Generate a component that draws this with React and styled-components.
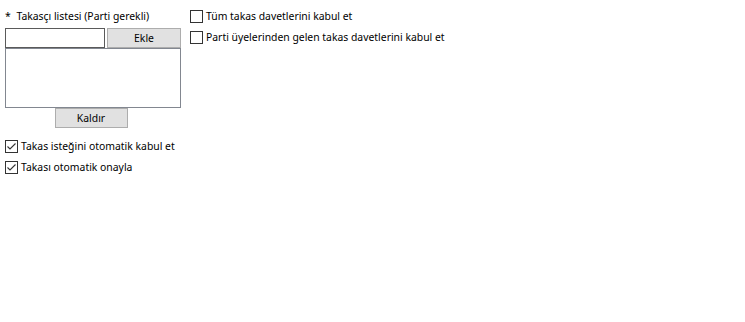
import React from "react";
import styled, { createGlobalStyle } from "styled-components";

const GlobalStyle = createGlobalStyle`
  html, body {
    margin: 0;
    padding: 0;
    background: #ffffff;
  }
  body {
    font-family: "Noto Sans", "Liberation Sans", sans-serif;
    font-size: 10.4px;
    color: #000000;
  }
`;

export default function App() {
  return (
    <Page>
      <GlobalStyle />
      <LeftColumn>
        <Title>
          <span>*</span> Takasçı listesi (Parti gerekli)
        </Title>
        <AddRow>
          <NameInput type="text" />
          <Button width="74px">Ekle</Button>
        </AddRow>
        <ListBox />
        <RemoveRow>
          <Button width="73px">Kaldır</Button>
        </RemoveRow>
        <Options>
          <Check checked label="Takas isteğini otomatik kabul et" />
          <Check checked label="Takası otomatik onayla" />
        </Options>
      </LeftColumn>
      <RightColumn>
        <Check label="Tüm takas davetlerini kabul et" />
        <Check label="Parti üyelerinden gelen takas davetlerini kabul et" />
      </RightColumn>
    </Page>
  );
}

function Check({ checked, label }) {
  return (
    <CheckRow>
      <Box>
        {checked && (
          <svg width="11" height="11" viewBox="0 0 11 11">
            <path d="M1.5 5.5 L4 8 L9.5 2.5" fill="none" stroke="#333" strokeWidth="1.1" />
          </svg>
        )}
      </Box>
      <span>{label}</span>
    </CheckRow>
  );
}

const Page = styled.div`
  display: flex;
  gap: 9px;
  padding: 5px;
`;

const LeftColumn = styled.div`
  display: flex;
  flex-direction: column;
  width: 176px;
`;

const Title = styled.div`
  height: 23px;
  padding-top: 3px;
  box-sizing: border-box;
  line-height: 16px;

  span {
    margin-right: 3px;
  }
`;

const AddRow = styled.div`
  display: flex;
  gap: 2px;
`;

const NameInput = styled.input`
  width: 100px;
  height: 20px;
  box-sizing: border-box;
  border: 1px solid #5a5a5a;
  margin: 0;
  padding: 0 3px;
  outline: none;
  background: #fff;
`;

const Button = styled.button`
  width: ${(props) => props.width};
  height: 20px;
  box-sizing: border-box;
  margin: 0;
  padding: 0;
  background: #e1e1e1;
  border: 1px solid #adadad;
  font-family: inherit;
  font-size: 10.4px;
  color: #000;
`;

const ListBox = styled.div`
  height: 60px;
  box-sizing: border-box;
  border: 1px solid #828790;
  background: #fff;
`;

const RemoveRow = styled.div`
  display: flex;
  justify-content: center;
  padding-right: 4px;
`;

const Options = styled.div`
  display: flex;
  flex-direction: column;
  gap: 8px;
  margin-top: 12px;
`;

const RightColumn = styled.div`
  display: flex;
  flex-direction: column;
  gap: 8px;
  padding-top: 5px;
`;

const CheckRow = styled.label`
  display: flex;
  align-items: center;
  gap: ${(props) => (props.wide ? "4px" : "3px")};
  height: 13px;
  line-height: 13px;
  white-space: nowrap;
`;

const Box = styled.span`
  width: 13px;
  height: 13px;
  box-sizing: border-box;
  border: 1px solid #333333;
  background: #fff;
  display: flex;
  align-items: center;
  justify-content: center;
`;
